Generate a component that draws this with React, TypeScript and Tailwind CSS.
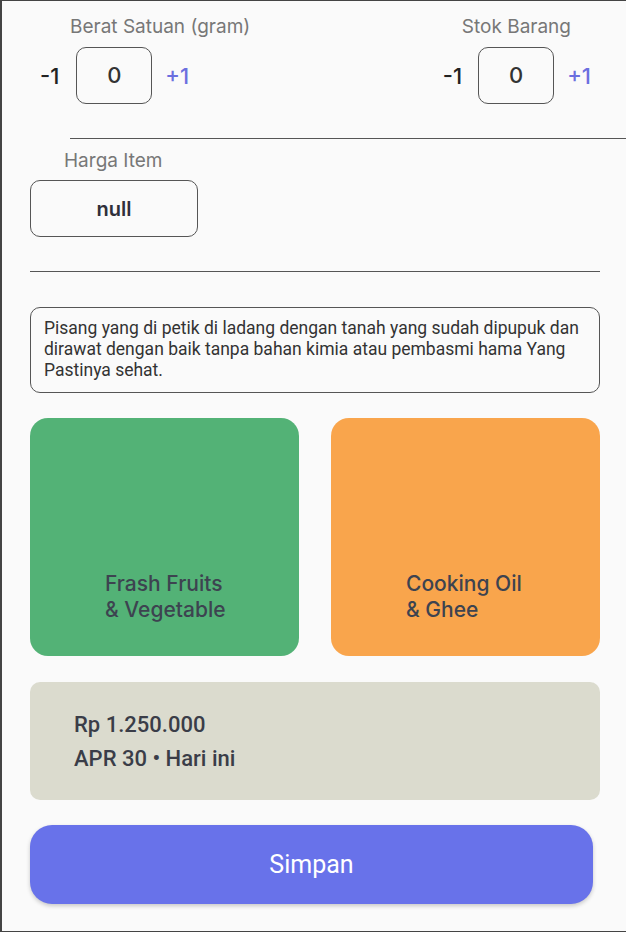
import React from "react";

const inter = { fontFamily: "Inter, 'Noto Sans', sans-serif" };
const roboto = { fontFamily: "Roboto, 'Noto Sans', sans-serif" };

function Stepper({ align }: { align: "left" | "right" }) {
  const left = align === "left";
  return (
    <div className="flex items-center" style={inter}>
      <span className={`text-[22px] leading-[26px] font-medium text-[#222] ${left ? "mr-[17px]" : "mr-[16px]"}`}>-1</span>
      <div className="w-[76px] h-[57px] border border-[#555] rounded-[10px] flex items-center justify-center text-[22px] font-medium text-[#333]">
        0
      </div>
      <span className={`text-[22px] leading-[26px] font-medium text-[#6b6fdf] ${left ? "ml-[13px]" : "ml-[13px]"}`}>+1</span>
    </div>
  );
}

export default function App() {
  return (
    <div className="w-[626px] h-[932px] bg-[#fafafa] border-l-2 border-t border-b border-[#444] box-border overflow-hidden flex flex-col">
      <div className="flex justify-between pt-[14px]">
        <div className="flex flex-col items-start pl-[38px]">
          <div className="ml-[30px] text-[19px] leading-[23px] text-[#777]" style={inter}>
            Berat Satuan (gram)
          </div>
          <div className="mt-[9px]">
            <Stepper align="left" />
          </div>
        </div>
        <div className="flex flex-col items-end pr-[35px]">
          <div className="mr-[20px] text-[19px] leading-[23px] text-[#777]" style={inter}>
            Stok Barang
          </div>
          <div className="mt-[9px]">
            <Stepper align="right" />
          </div>
        </div>
      </div>

      <div className="ml-[68px] mt-[34px] h-px bg-[#555]" />

      <div className="ml-[62px] mt-[10px] text-[19px] leading-[23px] text-[#777]" style={inter}>
        Harga Item
      </div>
      <div
        className="ml-[28px] mt-[8px] w-[168px] h-[57px] border border-[#555] rounded-[10px] flex items-center justify-center text-[20px] font-semibold text-[#2f2f3a]"
        style={inter}
      >
        null
      </div>

      <div className="ml-[28px] mt-[34px] w-[570px] h-px bg-[#555]" />

      <div
        className="ml-[28px] mt-[35px] w-[570px] h-[86px] border border-[#555] rounded-[10px] px-[13px] py-[10px] text-[17.5px] leading-[21px] text-[#333]"
        style={roboto}
      >
        Pisang yang di petik di ladang dengan tanah yang sudah dipupuk dan dirawat dengan baik tanpa bahan kimia atau pembasmi hama Yang Pastinya sehat.
      </div>

      <div className="ml-[28px] mt-[25px] flex gap-[32px]">
        <div className="w-[269px] h-[238px] rounded-[18px] bg-[#53b276] flex flex-col justify-end pl-[75px] pb-[33px]">
          <div className="text-[21px] leading-[26px] font-medium text-[#3d4350]" style={inter}>
            Frash Fruits
            <br />& Vegetable
          </div>
        </div>
        <div className="w-[269px] h-[238px] rounded-[18px] bg-[#f9a54c] flex flex-col justify-end pl-[75px] pb-[33px]">
          <div className="text-[21px] leading-[26px] font-medium text-[#3d4350]" style={inter}>
            Cooking Oil
            <br />& Ghee
          </div>
        </div>
      </div>

      <div className="ml-[28px] mt-[26px] w-[570px] h-[118px] rounded-[10px] bg-[#dbdbce] pl-[44px] pt-[30px]" style={roboto}>
        <div className="text-[22px] leading-[26px] font-medium text-[#3a3d48]">Rp 1.250.000</div>
        <div className="mt-[8px] text-[22px] leading-[26px] font-medium text-[#3a3d48]">APR 30 • Hari ini</div>
      </div>

      <div
        className="ml-[28px] mt-[25px] w-[563px] h-[79px] rounded-[22px] bg-[#6872ea] shadow-[0_2px_4px_rgba(0,0,0,0.2)] flex items-center justify-center text-white text-[25px]"
        style={roboto}
      >
        Simpan
      </div>
    </div>
  );
}
